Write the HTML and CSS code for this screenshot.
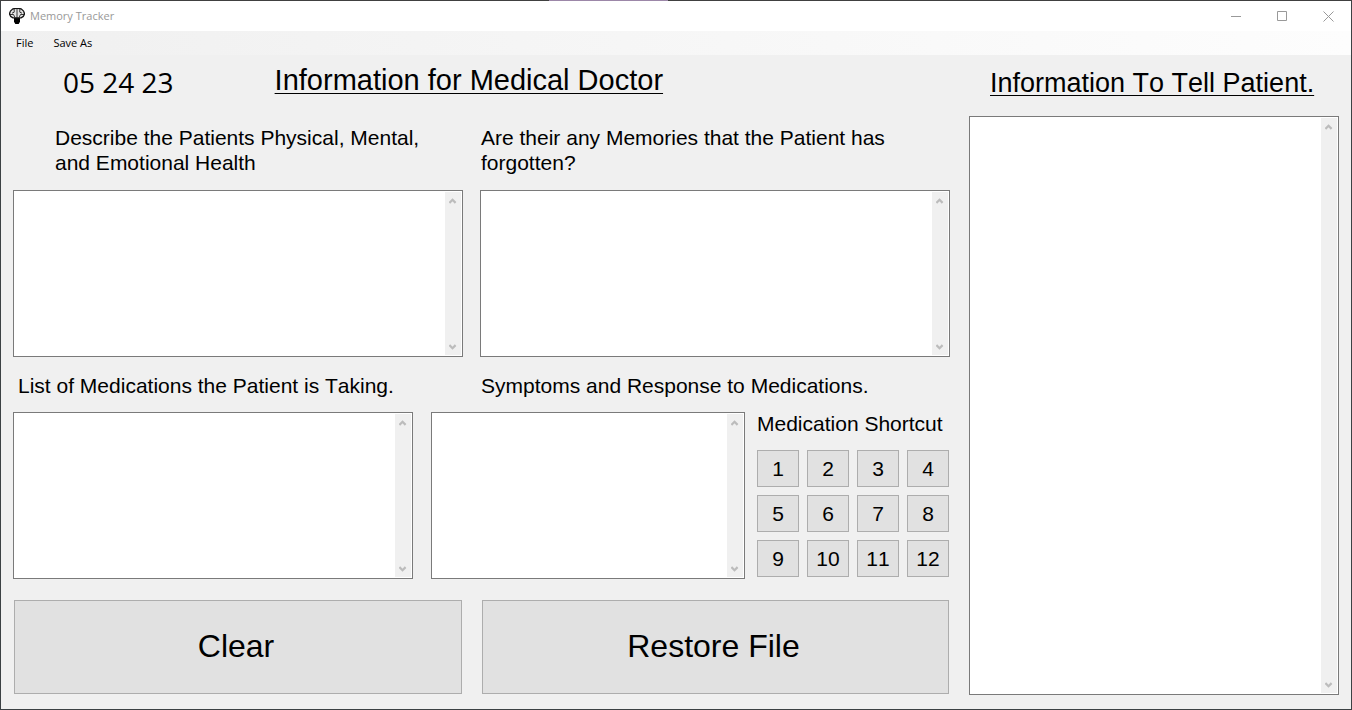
FILE: index.html
```html
<!DOCTYPE html>
<html lang="en">
<head>
<meta charset="utf-8">
<title>Memory Tracker</title>
<link rel="stylesheet" href="styles.css">
</head>
<body>
<svg class="defs" aria-hidden="true">
  <symbol id="up" viewBox="0 0 8 6"><path d="M.4 4.900 3.500 1.800 6.600 4.900" fill="none" stroke="#bcbcbc" stroke-width="2.200"/></symbol>
  <symbol id="down" viewBox="0 0 8 6"><path d="M.4 1.100 3.500 4.200 6.600 1.100" fill="none" stroke="#bcbcbc" stroke-width="2.200"/></symbol>
</svg>
<div class="window">
  <header class="titlebar">
    <svg class="logo" viewBox="0 0 16 16" aria-hidden="true">
      <path d="M5 9.500h6v4.200L9.700 16H6.300L5 13.700z" fill="#000"/>
      <path d="M3.400 1.200Q5.500.2 8 .4q2.500-.2 4.600.8 2.800 1.800 2.800 4.600 0 2.700-3.400 4H4Q.6 8.500.6 5.800.6 3 3.400 1.200z" fill="#e4e4e4" stroke="#111" stroke-width="1.300"/>
      <path d="M8 .5v10M5.200 1.200v3L3 5.200M10.800 1.200v3l2.200 1M1 6.500h3.500l1.300 2.800M15 6.500h-3.500l-1.300 2.800" fill="none" stroke="#222" stroke-width=".9"/>
    </svg>
    <span class="title">Memory Tracker</span>
    <button class="control" aria-label="Minimize"><svg viewBox="0 0 11 11"><path d="M0 5.500h10" /></svg></button>
    <button class="control" aria-label="Maximize"><svg viewBox="0 0 11 11"><path d="M.5.5h9v9h-9z" /></svg></button>
    <button class="control" aria-label="Close"><svg viewBox="0 0 11 11"><path d="M.5.5l10 10M10.500.5l-10 10" /></svg></button>
  </header>
  <nav class="menu">
    <button>File</button>
    <button>Save As</button>
  </nav>
  <main class="content">
    <section class="doctor">
      <div class="heading-row">
        <time class="date" datetime="2023-05-24">05 24 23</time>
        <h1>Information for Medical Doctor</h1>
      </div>
      <div class="pair labels tall">
        <label class="inset" for="health">Describe the Patients Physical, Mental, and Emotional Health</label>
        <label class="beside" for="memories">Are their any Memories that the Patient has forgotten?</label>
      </div>
      <div class="pair fields">
        <div class="field"><textarea id="health"></textarea><div class="scroll"><button aria-label="Scroll up"><svg><use href="#up"/></svg></button><button aria-label="Scroll down"><svg><use href="#down"/></svg></button></div></div>
        <div class="field"><textarea id="memories"></textarea><div class="scroll"><button aria-label="Scroll up"><svg><use href="#up"/></svg></button><button aria-label="Scroll down"><svg><use href="#down"/></svg></button></div></div>
      </div>
      <div class="pair labels">
        <label class="nudge" for="medications">List of Medications the Patient is Taking.</label>
        <label class="beside" for="symptoms">Symptoms and Response to Medications.</label>
      </div>
      <div class="medication fields">
        <div class="medication-fields">
          <div class="field"><textarea id="medications"></textarea><div class="scroll"><button aria-label="Scroll up"><svg><use href="#up"/></svg></button><button aria-label="Scroll down"><svg><use href="#down"/></svg></button></div></div>
          <div class="field"><textarea id="symptoms"></textarea><div class="scroll"><button aria-label="Scroll up"><svg><use href="#up"/></svg></button><button aria-label="Scroll down"><svg><use href="#down"/></svg></button></div></div>
        </div>
        <div class="shortcuts">
          <h2>Medication Shortcut</h2>
          <div class="keys">
            <button class="push">1</button><button class="push">2</button><button class="push">3</button><button class="push">4</button>
            <button class="push">5</button><button class="push">6</button><button class="push">7</button><button class="push">8</button>
            <button class="push">9</button><button class="push">10</button><button class="push">11</button><button class="push">12</button>
          </div>
        </div>
      </div>
      <div class="actions">
        <button class="push large">Clear</button>
        <button class="push large">Restore File</button>
      </div>
    </section>
    <section class="patient">
      <label class="patient-title" for="tell">Information To Tell Patient.</label>
      <div class="field"><textarea id="tell"></textarea><div class="scroll"><button aria-label="Scroll up"><svg><use href="#up"/></svg></button><button aria-label="Scroll down"><svg><use href="#down"/></svg></button></div></div>
    </section>
  </main>
</div>
</body>
</html>
```
FILE: styles.css
```css
* { box-sizing: border-box; }

body {
  margin: 0;
  color: #000;
  font: 21px/25px "Liberation Sans", Arial, sans-serif;
  font-kerning: none;
}

button {
  padding: 0;
  border: 0;
  background: none;
  color: inherit;
  font: inherit;
  font-kerning: none;
}

h1, h2 { margin: 0; font-weight: 400; }

.defs { position: absolute; width: 0; height: 0; }

.window {
  display: flex;
  flex-direction: column;
  min-height: 100vh;
  padding: 1px;
  background: linear-gradient(90deg, #404040 0 549px, #9c87a8 549px 668px, #404040 668px) top / 100% 1px no-repeat #3c4144;
}

.titlebar {
  display: flex;
  align-items: center;
  height: 30px;
  padding-left: 8px;
  background: #fff;
  color: #999;
  font: 11px/16px "Open Sans", "Noto Sans", sans-serif;
}

.logo { width: 16px; height: 16px; margin-right: 5px; }
.title { flex: 1; }

.control {
  display: grid;
  place-items: center;
  width: 46px;
  height: 28px;
}

.control svg {
  width: 11px;
  height: 11px;
  fill: none;
  stroke: #999;
}

.menu {
  display: flex;
  gap: 20px;
  height: 24px;
  padding-left: 15px;
  background: linear-gradient(90deg, #f0f0f0, #fdfdfd);
  font: 11px/24px "Open Sans", "Noto Sans", sans-serif;
}

.content {
  flex: 1;
  display: grid;
  grid-template-columns: minmax(0, 937fr) minmax(0, 370fr);
  gap: 19px;
  padding: 0 12px 14px;
  background: #f0f0f0;
}

.doctor, .patient { display: flex; flex-direction: column; }

.heading-row {
  display: flex;
  gap: 101px;
  height: 69px;
  padding: 7px 0 0 50px;
}

.date { font: 28px/40px "Open Sans", "Noto Sans", sans-serif; }

h1 {
  font-size: 29px;
  line-height: 36px;
  text-decoration: underline;
  text-decoration-thickness: 1px;
  text-underline-offset: 3px;
}

.pair {
  display: grid;
  grid-template-columns: minmax(0, 450fr) minmax(0, 470fr);
  column-gap: 17px;
}

.medication {
  display: grid;
  grid-template-columns: minmax(0, 1fr) 193px;
  column-gap: 12px;
}

.medication-fields {
  display: grid;
  grid-template-columns: minmax(0, 400fr) minmax(0, 314fr);
  column-gap: 18px;
}

.labels { padding: 16px 0 14px; }
.labels.tall { padding: 1px 0 15px; }
.inset { padding: 0 25px 0 42px; }
.nudge { padding-left: 5px; }
.beside { padding-left: 1px; }

.fields { flex: 1; min-height: 120px; }

.field {
  display: flex;
  flex: 1;
  padding: 1px;
  border: 1px solid #7a7a7a;
  background: #fff;
}

textarea {
  flex: 1;
  min-width: 0;
  padding: 2px;
  border: 0;
  outline: 0;
  resize: none;
  overflow: hidden;
  background: #fff;
  font: inherit;
}

.scroll {
  display: flex;
  flex-direction: column;
  justify-content: space-between;
  width: 16px;
  background: #f0f0f0;
}

.scroll button {
  display: grid;
  place-items: center;
  height: 17px;
}

.scroll svg { width: 8px; height: 6px; }

h2 {
  font-size: inherit;
  line-height: 23px;
  white-space: nowrap;
}

.shortcuts {
  display: flex;
  flex-direction: column;
  gap: 15px;
  padding: 0 1px 2px 0;
}

.keys {
  flex: 1;
  display: grid;
  grid-template-columns: repeat(4, 1fr);
  gap: 8px;
}

.push {
  border: 1px solid #adadad;
  background: #e1e1e1;
}

.actions {
  display: grid;
  grid-template-columns: minmax(0, 448fr) minmax(0, 467fr);
  column-gap: 20px;
  padding: 21px 1px 1px;
}

.large {
  height: 94px;
  padding: 0 4px 2px 0;
  font-size: 32px;
  line-height: 36px;
}

.patient-title {
  height: 61px;
  padding: 10px 0 0 21px;
  font-size: 27px;
  line-height: 36px;
  text-decoration: underline;
  text-decoration-thickness: 1px;
  text-underline-offset: 3px;
}
```
